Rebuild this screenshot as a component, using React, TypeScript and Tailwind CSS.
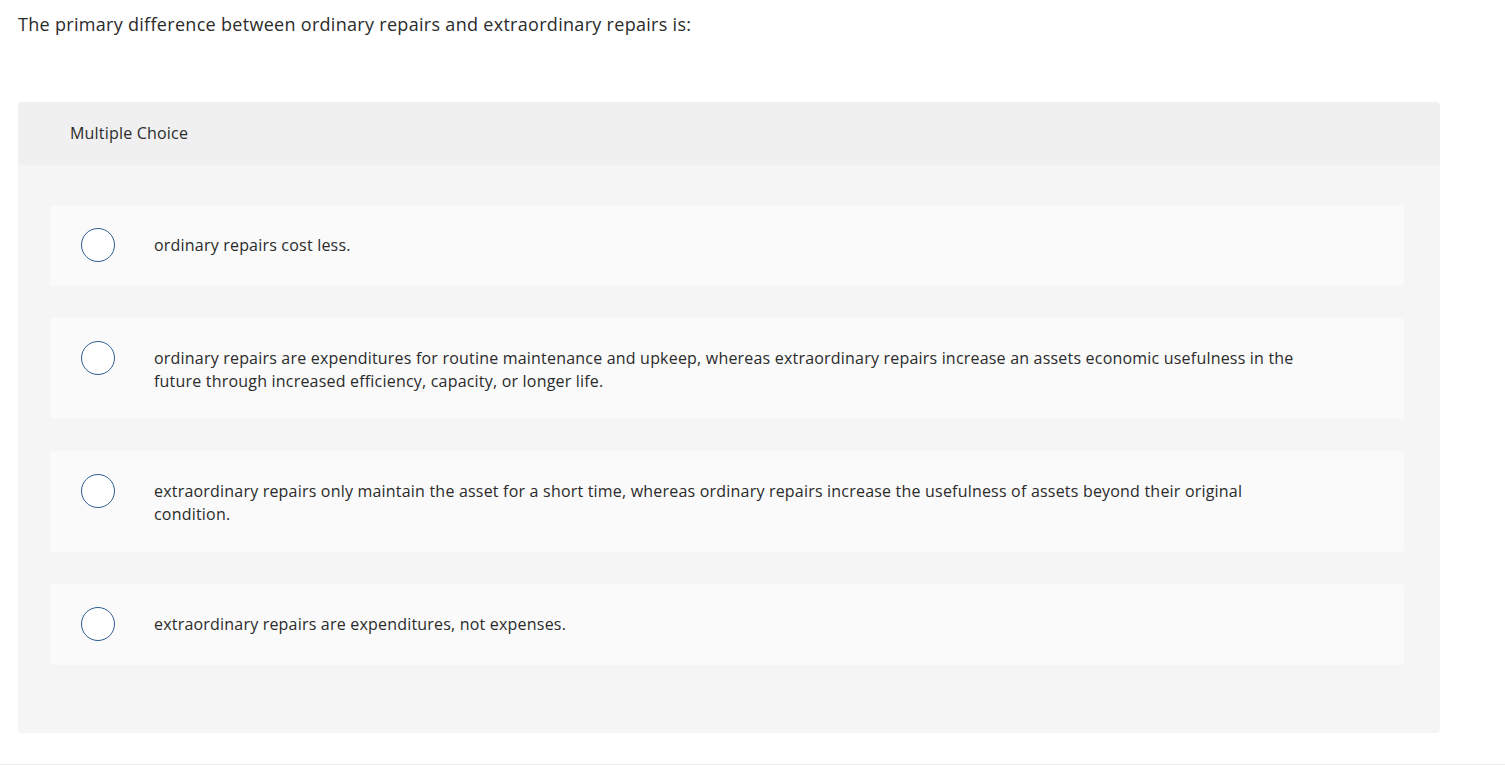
import React from "react";

const options = [
  "ordinary repairs cost less.",
  "ordinary repairs are expenditures for routine maintenance and upkeep, whereas extraordinary repairs increase an assets economic usefulness in the future through increased efficiency, capacity, or longer life.",
  "extraordinary repairs only maintain the asset for a short time, whereas ordinary repairs increase the usefulness of assets beyond their original condition.",
  "extraordinary repairs are expenditures, not expenses.",
];

export default function App() {
  return (
    <div className="min-h-[765px] bg-white font-['Open_Sans',sans-serif] text-[#2b2b2b] border-b border-[#ececec]">
      <div className="pl-[18px] pt-[12px]">
        <p className="text-[18px] leading-[24px] tracking-[0.3px]">
          The primary difference between ordinary repairs and extraordinary repairs is:
        </p>
      </div>

      <div className="mt-[66px] ml-[18px] w-[1422px] rounded-[4px] bg-[#f5f5f5] overflow-hidden">
        <div className="h-[63px] bg-[#f0f0f0] flex items-center pl-[52px] pb-[1px]">
          <span className="text-[16px] tracking-[0.2px]">Multiple Choice</span>
        </div>

        <div className="px-[32px] pt-[40px] pb-[68px] flex flex-col gap-[32px]">
          {options.map((text, i) => (
            <label
              key={i}
              className="flex items-start w-[1354px] rounded-[4px] bg-[#fafafa] pl-[31px] pr-[110px] pt-[23px] pb-[24px] cursor-pointer"
            >
              <span className="shrink-0 w-[34px] h-[34px] rounded-full border-[1.5px] border-[#2d5e90] bg-white" />
              <span className="ml-[39px] mt-[6px] mb-[2px] text-[16px] leading-[23px] tracking-[0.2px] text-[#2b2b2b]">
                {text}
              </span>
            </label>
          ))}
        </div>
      </div>
    </div>
  );
}
